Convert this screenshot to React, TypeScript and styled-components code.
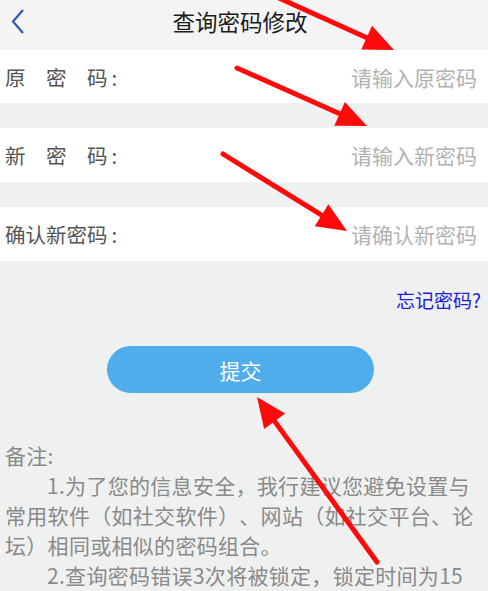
import React from 'react';
import styled, { createGlobalStyle } from 'styled-components';

const GlobalStyle = createGlobalStyle`
  html, body {
    margin: 0;
    padding: 0;
    background-color: #eff0f0;
    font-family: "Noto Sans CJK SC", "Noto Sans", sans-serif;
  }
`

const Page = styled.div`
  position: relative;
  width: 488px;
  height: 591px;
  overflow: hidden;
  background-color: #eff0f0;
`

const Header = styled.div`
  display: grid;
  grid-template-columns: 60px 1fr 60px;
  align-items: center;
  height: 42px;
  padding-bottom: 8px;
  background-color: #f4f4f4;
`

const BackBtn = styled.div`
  display: flex;
  align-items: center;
  padding-left: 10px;
`

const Title = styled.div`
  text-align: center;
  font-size: 22.5px;
  color: #1c1c1c;
  margin-right: 8px;
`

const Form = styled.div`
  display: flex;
  flex-direction: column;
  gap: 25px;
`

const Row = styled.div<{ $h: number }>`
  display: flex;
  align-items: center;
  justify-content: space-between;
  height: ${p => p.$h}px;
  padding: 0 11px 0 5px;
  background-color: #ffffff;
`

const Label = styled.span`
  font-size: 20.5px;
  color: #555555;
  white-space: pre;
`

const Colon = styled.span`
  margin-left: 4px;
`

const Field = styled.input`
  border: none;
  outline: none;
  background: transparent;
  text-align: right;
  font-family: inherit;
  font-size: 21px;
  color: #333;
  width: 200px;
  padding: 0;
  &::placeholder {
    color: #b2b2b2;
  }
`

const ForgetRow = styled.div`
  display: flex;
  justify-content: flex-end;
  padding: 0 7px;
  margin-top: 24px;
  line-height: 30px;
`

const ForgetLink = styled.a`
  font-size: 19px;
  color: #2020dc;
  text-decoration: none;
`

const BtnWrap = styled.div`
  display: flex;
  padding-left: 107px;
  margin-top: 31px;
`

const SubmitBtn = styled.button`
  width: 267px;
  height: 47px;
  border: none;
  border-radius: 24px;
  background-color: #4eadea;
  color: #ffffff;
  font-family: inherit;
  font-size: 21px;
`

const Notes = styled.div`
  margin-top: 47px;
  padding: 0 8px 0 5px;
  font-size: 21px;
  letter-spacing: 0.3px;
  line-height: 30px;
  color: #8a8a8a;
  text-spacing-trim: space-all;
`

const NotePara = styled.p<{ $indent?: boolean }>`
  margin: 0;
  text-indent: ${p => (p.$indent ? '2em' : '0')};
`

const Overlay = styled.svg`
  position: absolute;
  left: 0;
  top: 0;
  pointer-events: none;
`

type Pt = [number, number]

const Arrow: React.FC<{ from: Pt; to: Pt }> = ({ from, to }) => {
  const dx = to[0] - from[0]
  const dy = to[1] - from[1]
  const len = Math.sqrt(dx * dx + dy * dy)
  const ux = dx / len
  const uy = dy / len
  const L = 30
  const W = 13
  const bx = to[0] - ux * L
  const by = to[1] - uy * L
  const pts = [
    `${to[0]},${to[1]}`,
    `${bx - uy * W},${by + ux * W}`,
    `${bx + uy * W},${by - ux * W}`,
  ].join(' ')
  return (
    <g>
      <line x1={from[0]} y1={from[1]} x2={bx + ux * 2} y2={by + uy * 2} stroke="#ff0a0a" strokeWidth={5} strokeLinecap="round" />
      <polygon points={pts} fill="#ff0a0a" />
    </g>
  )
}

const arrows: { from: Pt; to: Pt }[] = [
  { from: [270, -6], to: [394, 50] },
  { from: [237, 68], to: [367, 126] },
  { from: [223, 154], to: [347, 231] },
  { from: [377, 562], to: [257, 397] },
]

const App: React.FC = () => {
  return (
    <Page>
      <GlobalStyle />
      <Header>
        <BackBtn>
          <svg width="16" height="27" viewBox="0 0 16 27">
            <polyline points="13,2 3,13.5 13,25" fill="none" stroke="#2a5db0" strokeWidth="2.2" />
          </svg>
        </BackBtn>
        <Title>查询密码修改</Title>
        <div />
      </Header>
      <Form>
        <Row $h={53}>
          <Label>原　密　码<Colon>:</Colon></Label>
          <Field type="password" placeholder="请输入原密码" />
        </Row>
        <Row $h={54}>
          <Label>新　密　码<Colon>:</Colon></Label>
          <Field type="password" placeholder="请输入新密码" />
        </Row>
        <Row $h={54}>
          <Label>确认新密码<Colon>:</Colon></Label>
          <Field type="password" placeholder="请确认新密码" />
        </Row>
      </Form>
      <ForgetRow>
        <ForgetLink href="#">忘记密码?</ForgetLink>
      </ForgetRow>
      <BtnWrap>
        <SubmitBtn type="button">提交</SubmitBtn>
      </BtnWrap>
      <Notes>
        <NotePara>备注:</NotePara>
        <NotePara $indent>1.为了您的信息安全，我行建议您避免设置与常用软件（如社交软件）、网站（如社交平台、论坛）相同或相似的密码组合。</NotePara>
        <NotePara $indent>2.查询密码错误3次将被锁定，锁定时间为15分钟。</NotePara>
      </Notes>
      <Overlay width="488" height="591" viewBox="0 0 488 591">
        {arrows.map((a, i) => (
          <Arrow key={i} from={a.from} to={a.to} />
        ))}
      </Overlay>
    </Page>
  );
}

export default App;
